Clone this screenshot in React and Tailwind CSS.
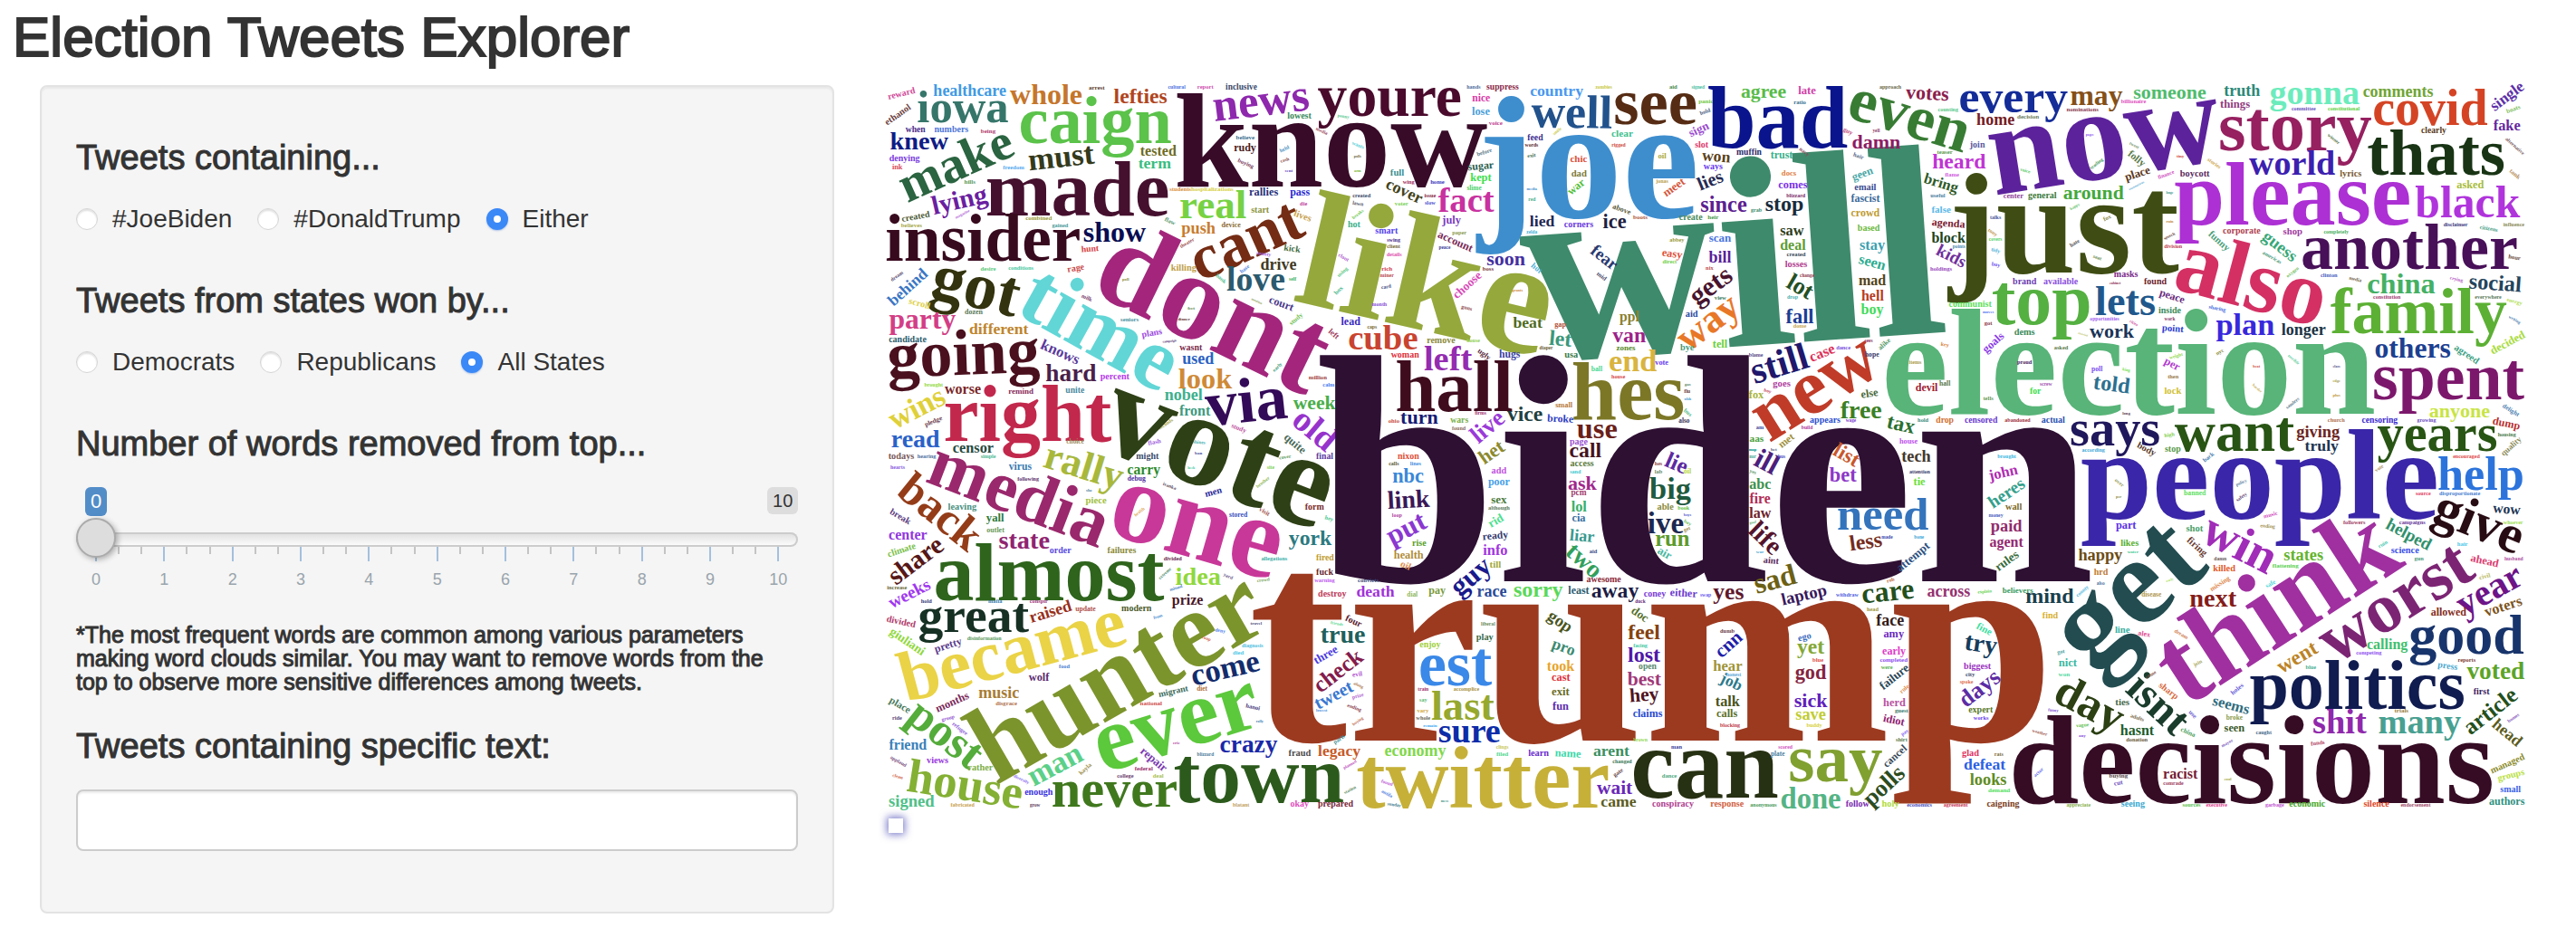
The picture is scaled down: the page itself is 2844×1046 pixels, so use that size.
import { useState } from "react";

// Advance widths of the bold serif face, in thousandths of an em.
const ADVANCE = {
  a: 500, b: 556, c: 444, d: 556, e: 444, f: 333, g: 500, h: 556, i: 278,
  j: 333, k: 556, l: 278, m: 833, n: 556, o: 500, p: 556, q: 556, r: 444,
  s: 389, t: 333, u: 556, v: 500, w: 722, x: 500, y: 500, z: 444,
};

// A word is [text, centre x, centre y, length, angle, colour].
// Centres lie on the middle of the x-height band.
const SECTIONS = [
  {
    x: -30, y: -42,
    words: [
      ["know", 1500, 273, 1020, 0, "#380b28"],
      ["reward", 79, 72, 92, -14, "#d14a9a"],
      ["iowa", 282, 129, 297, 0, "#36766a"],
      ["healthcare", 305, 64, 240, 0, "#419ae4"],
      ["whole", 558, 82, 235, 0, "#c5762b"],
      ["lefties", 870, 85, 175, 0, "#b04520"],
      ["ethanol", 68, 142, 98, -35, "#6b3f3f"],
      ["when", 125, 192, 65, 0, "#4b2e8c"],
      ["numbers", 244, 192, 112, 0, "#4d75d9"],
      ["being", 366, 195, 48, 0, "#b23a6e"],
      ["knew", 137, 235, 190, 0, "#101c85"],
      ["denying", 89, 288, 102, 0, "#7a3ce0"],
      ["ink", 65, 316, 34, 0, "#d94a5a"],
      ["make", 264, 315, 392, -24, "#2a6440"],
      ["caign", 720, 180, 500, 0, "#5bc24a"],
      ["must", 608, 288, 215, -6, "#343a1c"],
      ["tested", 929, 264, 118, 0, "#6e6b22"],
      ["term", 917, 304, 106, 0, "#38bd80"],
      ["freedom", 450, 315, 72, 0, "#55aaf0"],
      ["made", 662, 411, 600, 0, "#45102e"],
      ["news", 1270, 107, 315, -7, "#8e28ad"],
      ["lying", 272, 430, 182, -13, "#6a20a0"],
      ["created", 126, 480, 94, -10, "#4c5a34"],
      ["insider", 349, 571, 638, 0, "#380a1e"],
      ["show", 784, 538, 204, 0, "#080d52"],
      ["hunt", 703, 586, 57, -4, "#d44040"],
      ["rudy", 1216, 253, 72, 0, "#4a2020"],
      ["real", 1110, 452, 220, 0, "#76d243"],
      ["push", 1062, 522, 110, 0, "#c87c30"],
      ["rallies", 1278, 398, 96, 0, "#262f7a"],
      ["pass", 1398, 400, 64, 0, "#2a2ad4"],
      ["start", 1266, 457, 58, 0, "#8a9440"],
      ["lives", 1407, 477, 60, 20, "#c9a34e"],
      ["cant", 1225, 570, 380, -24, "#742c14"],
      ["dont", 1100, 811, 785, 26, "#a3267c"],
      ["time", 727, 868, 545, 29, "#62d6d6"],
      ["love", 1252, 697, 190, 0, "#2b5a6e"],
      ["drive", 1327, 640, 117, 0, "#3f3a24"],
      ["killing", 1013, 650, 82, 0, "#bfa04a"],
      ["kick", 1372, 586, 54, 8, "#3f6b3a"],
      ["court", 1336, 768, 82, 20, "#4a3a8c"],
      ["got", 322, 725, 285, 14, "#33330f"],
      ["behind", 102, 714, 155, -42, "#3a76c4"],
      ["scroll", 138, 768, 72, 15, "#e0d04a"],
      ["party", 148, 828, 218, 0, "#d33e86"],
      ["different", 401, 855, 196, 0, "#bf852c"],
      ["candidate", 99, 888, 122, 0, "#2b5c6e"],
      ["going", 284, 950, 498, -2, "#4a101e"],
      ["knows", 603, 930, 135, 24, "#5a3a9c"],
      ["hard", 640, 1003, 166, 0, "#4a1f4a"],
      ["percent", 785, 1010, 95, 0, "#b53ae8"],
      ["wasnt", 1037, 913, 74, 0, "#7a2a4a"],
      ["used", 1061, 952, 102, 0, "#2a62c4"],
      ["look", 1084, 1023, 174, 0, "#cf8a36"],
      ["nobel", 1013, 1073, 125, 0, "#3cb08c"],
      ["front", 1050, 1127, 102, 0, "#3c9a80"],
      ["plans", 908, 865, 68, -10, "#9b4ae0"],
      ["worse", 282, 1055, 119, 0, "#7a2626"],
      ["wins", 133, 1118, 192, -27, "#dfd03a"],
      ["right", 496, 1160, 546, 0, "#c2284c"],
      ["via", 1222, 1108, 262, -6, "#330a58"],
      ["read", 125, 1222, 160, 0, "#2a62c8"],
      ["week", 1446, 1100, 138, 0, "#4aae4a"],
      ["old", 1442, 1190, 150, 40, "#9633cc"],
      ["censor", 316, 1248, 133, 0, "#25493e"],
      ["quite", 1380, 1232, 80, 40, "#4a6b5a"],
      ["unite", 653, 1056, 62, 0, "#4a8aa0"],
      ["remind", 474, 1058, 84, 0, "#8a2a5a"],
      ["brought", 185, 1036, 62, 0, "#90d83c"],
      ["conditions", 474, 651, 82, 0, "#4ac8a0"],
      ["desire", 366, 651, 50, 0, "#58c878"],
      ["rage", 656, 650, 56, -10, "#c84848"],
      ["dream", 64, 676, 46, -35, "#5a4a70"],
      ["dozen", 318, 795, 60, 0, "#5a7a5a"],
      ["milk", 692, 748, 36, 24, "#7a3a6a"],
      ["seniors", 834, 819, 60, 0, "#4a90a0"],
      ["campaign", 966, 890, 46, -6, "#4a2a6a"],
      ["cultural", 990, 50, 56, 0, "#4a70e0"],
      ["report", 1085, 50, 54, 0, "#d050b0"],
      ["inclusive", 1204, 50, 104, 0, "#3a4a6a"],
      ["arrest", 725, 52, 54, 0, "#5a3a2a"],
      ["lowest", 1396, 146, 80, 0, "#3a8a5a"],
      ["believe", 1217, 218, 60, 0, "#3a7090"],
      ["buying", 1218, 303, 54, 24, "#7a3a5a"],
      ["held", 1347, 255, 32, -25, "#4a90c0"],
      ["cash", 1348, 291, 30, -15, "#8a4a4a"],
      ["sent", 1361, 326, 26, 0, "#6a4ac0"],
      ["students", 1002, 387, 70, 0, "#d89040"],
      ["hospitalizations", 1108, 387, 136, 0, "#d8d040"],
      ["hills", 305, 363, 36, 0, "#5a9a5a"],
      ["magazine", 281, 470, 52, -28, "#b060d8"],
      ["combined", 533, 483, 86, 0, "#9a9a3a"],
      ["gained", 604, 508, 54, 0, "#4a9a9a"],
      ["believes", 112, 508, 68, 0, "#a8a848"],
      ["flaw", 967, 494, 36, 25, "#5a9a70"],
      ["theater", 1025, 566, 50, -30, "#9a4a4a"],
      ["device", 1170, 508, 62, 0, "#8a6a30"],
      ["county", 1278, 602, 48, 8, "#a060e0"],
      ["base", 1216, 652, 34, -38, "#4a80e0"],
      ["bank", 1136, 684, 38, 40, "#4ac08a"],
      ["self", 1374, 687, 24, 0, "#3ab060"],
      ["mention", 1255, 758, 38, 25, "#8a9a50"],
      ["study", 1386, 818, 50, -40, "#70c050"],
      ["poll", 821, 686, 22, 0, "#8a8a3a"],
      ["feet", 1038, 783, 22, 0, "#4a7a3a"],
      ["dinner", 1014, 818, 38, 0, "#6a3a3a"],
      ["early", 1324, 977, 36, -45, "#4aa080"],
      ["pledge", 185, 1157, 60, -22, "#6a3a4a"],
      ["seconds", 954, 1166, 56, -34, "#a8a850"],
      ["study", 1195, 1180, 50, 22, "#c050a0"],
      ["flash", 917, 1226, 42, -12, "#a060e0"],
      ["shines", 1064, 1226, 42, 5, "#4ab0b0"],
      ["choice", 654, 1226, 58, 0, "#9a8a5a"],
      ["die", 1410, 436, 24, 0, "#c040a0"],
    ],
  },
  {
    x: 1380, y: -42,
    words: [
      ["will", 1426, 695, 1368, -4, "#3e8a6c"],
      ["youre", 285, 98, 474, 0, "#4a0a2c"],
      ["suppress", 659, 50, 108, 0, "#8a2a4a"],
      ["hands", 563, 50, 46, 0, "#5070a0"],
      ["nice", 588, 88, 59, 0, "#d93aa8"],
      ["lose", 587, 133, 58, 0, "#4aa0d9"],
      ["country", 838, 66, 175, 0, "#4a98f0"],
      ["well", 888, 146, 262, 1, "#22528c"],
      ["see", 1165, 120, 270, 0, "#562c14"],
      ["joe", 943, 345, 712, 0, "#3e8ece"],
      ["feed", 767, 217, 50, 0, "#3a2a8c"],
      ["clear", 1055, 206, 70, 0, "#3fc08c"],
      ["sign", 1310, 192, 68, -25, "#9a4ad0"],
      ["slot", 1318, 241, 44, 0, "#e03a6a"],
      ["ways", 1356, 314, 62, 0, "#6a3af0"],
      ["won", 1366, 282, 92, 5, "#5c4218"],
      ["lies", 1348, 362, 84, -22, "#252a52"],
      ["meet", 1228, 383, 78, -35, "#d4553a"],
      ["chic", 911, 289, 55, 0, "#d9503a"],
      ["dad", 912, 337, 50, 0, "#7a7a3a"],
      ["war", 904, 381, 62, -38, "#55c03a"],
      ["since", 1391, 445, 152, 0, "#5c2090"],
      ["sugar", 587, 313, 84, -5, "#2a6050"],
      ["kept", 587, 350, 68, 0, "#3ae04a"],
      ["slime", 565, 386, 47, 0, "#4ad06a"],
      ["full", 310, 335, 45, 0, "#3a9090"],
      ["cover", 332, 397, 125, 25, "#44441c"],
      ["fact", 538, 434, 182, 0, "#c832a0"],
      ["july", 490, 493, 60, 0, "#7a3ac0"],
      ["smart", 275, 528, 74, 0, "#5540f0"],
      ["hot", 167, 505, 41, 0, "#3ab08a"],
      ["account", 502, 562, 122, 24, "#7a2a5a"],
      ["lied", 790, 498, 80, 0, "#232852"],
      ["corners", 911, 505, 95, 0, "#6a3ae0"],
      ["ice", 1030, 500, 75, 0, "#1f1f3f"],
      ["above", 1053, 455, 62, 20, "#5a5a3a"],
      ["create", 1282, 481, 77, 0, "#4a8a5a"],
      ["soon", 670, 622, 126, 0, "#4530a0"],
      ["choose", 544, 707, 112, -42, "#d84ab8"],
      ["like", 401, 724, 830, 13, "#95a83c"],
      ["lead", 156, 829, 62, 0, "#3a2ac0"],
      ["cube", 263, 890, 227, 0, "#c94430"],
      ["woman", 336, 938, 92, 0, "#e0303a"],
      ["left", 478, 960, 155, 0, "#942cb0"],
      ["remove", 455, 889, 94, 0, "#8a8a3a"],
      ["beat", 742, 834, 95, 0, "#4e6a20"],
      ["let", 850, 888, 72, 5, "#3c987a"],
      ["hugs", 682, 938, 69, 0, "#3a40a0"],
      ["usa", 886, 938, 43, 0, "#3a7a4a"],
      ["hall", 499, 1065, 382, 0, "#3f0c1e"],
      ["turn", 383, 1148, 122, 0, "#161c74"],
      ["vice", 733, 1139, 116, 0, "#1f4040"],
      ["live", 613, 1178, 118, -40, "#9a3ad8"],
      ["broke", 850, 1150, 86, 3, "#2a3ac0"],
      ["small", 862, 1104, 55, 0, "#b87a3a"],
      ["hes", 1075, 1084, 365, 0, "#7c7726"],
      ["end", 1090, 965, 156, 0, "#d9b440"],
      ["way", 1345, 835, 222, -37, "#e87828"],
      ["van", 1078, 878, 108, 0, "#9c2288"],
      ["ppl", 1079, 814, 64, 0, "#8a8030"],
      ["zones", 1067, 914, 61, 0, "#5a8a2a"],
      ["use", 972, 1190, 131, 0, "#6a1f1a"],
      ["page", 911, 1227, 58, 0, "#9a50d0"],
      ["gets", 1352, 712, 150, -36, "#48142e"],
      ["bill", 1379, 618, 73, 0, "#5a2098"],
      ["fear", 993, 617, 96, 38, "#2a3a70"],
      ["easy", 1220, 603, 66, 8, "#e0503a"],
      ["scan", 1379, 553, 72, 0, "#4a74e0"],
      ["aid", 1285, 803, 40, 0, "#2a4aa0"],
      ["bye", 1270, 913, 45, 0, "#4a9a7a"],
      ["tell", 1379, 902, 48, 0, "#6ad03a"],
      ["wars", 516, 1153, 58, 0, "#7ab04a"],
      ["penny", 132, 146, 38, 8, "#58c890"],
      ["media", 60, 195, 40, 25, "#a04a60"],
      ["wants", 180, 242, 42, 22, "#58d0d8"],
      ["polls", 179, 278, 24, 0, "#6a6a3a"],
      ["arm", 179, 326, 22, 0, "#78b83a"],
      ["before", 599, 266, 52, -18, "#5a7a8a"],
      ["exit", 755, 277, 28, -8, "#3a6a4a"],
      ["words", 755, 243, 44, 0, "#5a2a2a"],
      ["smile", 840, 195, 32, -40, "#c8c840"],
      ["voice", 636, 170, 44, 0, "#c04090"],
      ["rigged", 1043, 243, 46, 0, "#d04a3a"],
      ["oil", 1187, 279, 26, 0, "#a8a83a"],
      ["jonas", 1187, 363, 40, 0, "#b8a050"],
      ["zombies", 994, 50, 54, 0, "#c8c840"],
      ["aid", 1224, 50, 26, 0, "#4a8a4a"],
      ["signed", 1306, 50, 42, 0, "#4ac0a0"],
      ["panic", 1332, 98, 48, 0, "#70c848"],
      ["hold", 1330, 132, 36, -20, "#4a6080"],
      ["media", 756, 387, 34, 0, "#4a90d0"],
      ["red", 756, 423, 24, 0, "#4ab090"],
      ["zelda", 756, 531, 36, 0, "#40b0d8"],
      ["issue", 419, 411, 38, 0, "#8a2a4a"],
      ["slow", 419, 435, 36, 0, "#4a50d0"],
      ["wing", 348, 364, 38, 0, "#a02a5a"],
      ["home", 443, 364, 46, 0, "#3a3ac0"],
      ["created", 192, 410, 60, 0, "#3a4a6a"],
      ["voter", 324, 435, 44, 0, "#78d050"],
      ["lawn", 180, 436, 36, 8, "#5a5a6a"],
      ["breaks", 180, 470, 42, -38, "#68c848"],
      ["swing", 298, 556, 44, 0, "#4a2a8a"],
      ["client", 298, 579, 44, 0, "#7a6a3a"],
      ["details", 300, 604, 48, 0, "#e050b0"],
      ["rich", 276, 651, 36, 0, "#d04050"],
      ["miner", 276, 675, 46, 0, "#b84a50"],
      ["card", 274, 711, 32, -10, "#3a4a80"],
      ["month", 251, 771, 50, 0, "#8a50d8"],
      ["clout", 132, 614, 38, 30, "#b060d0"],
      ["using", 130, 662, 40, -42, "#58c880"],
      ["box", 117, 723, 32, -45, "#4ab890"],
      ["paper", 516, 532, 46, 0, "#8a9a50"],
      ["peace", 467, 580, 38, 0, "#3a3a9a"],
      ["boss", 611, 652, 36, 0, "#7a3a3a"],
      ["guns", 540, 781, 36, 15, "#904a4a"],
      ["grants", 708, 723, 36, 0, "#d08a40"],
      ["hot", 770, 650, 36, 40, "#50b0d8"],
      ["mid", 986, 676, 34, 38, "#4a4a6a"],
      ["boots", 1115, 482, 46, 0, "#b05a3a"],
      ["heir", 1356, 482, 36, 0, "#4a9a4a"],
      ["abbey", 1236, 556, 48, 0, "#9a9a3a"],
      ["direct", 1212, 628, 46, 0, "#70d048"],
      ["nix", 1344, 651, 24, 0, "#c04a4a"],
      ["view", 1380, 748, 38, 0, "#3a7a5a"],
      ["gap", 850, 838, 38, 0, "#b0503a"],
      ["diaper", 803, 915, 44, 0, "#6a5a30"],
      ["house", 562, 891, 44, 0, "#90d050"],
      ["ugly", 597, 935, 46, 38, "#5a2a3a"],
      ["ball", 971, 986, 36, 0, "#48d890"],
      ["vote", 1186, 963, 44, 0, "#6a3af0"],
      ["house", 1042, 1011, 46, 0, "#d84a4a"],
      ["million", 47, 1011, 60, 0, "#a04040"],
      ["calm", 83, 1036, 38, 0, "#4a80f0"],
      ["ohio", 299, 1156, 36, 0, "#c84a40"],
      ["found", 514, 1180, 44, 0, "#8a6a5a"],
      ["firms", 586, 1130, 38, 0, "#a03070"],
      ["gas", 1272, 1034, 20, 0, "#5a8a6a"],
      ["flu", 1270, 1058, 20, 0, "#6a3a3a"],
      ["ohh", 1272, 1083, 22, 0, "#4a9ad0"],
      ["bus", 1271, 1128, 28, 40, "#4ab880"],
      ["also", 1260, 1156, 36, 0, "#3a3a5a"],
      ["left", 99, 868, 36, 40, "#a04060"],
      ["caps", 227, 844, 32, 0, "#7a6a30"],
    ],
  },
  {
    x: 2760, y: -42,
    words: [
      ["bad", 190, 180, 455, 0, "#0a148c"],
      ["agree", 143, 70, 150, 0, "#58bc48"],
      ["late", 287, 63, 57, 0, "#d040a8"],
      ["even", 623, 159, 402, 17, "#387c34"],
      ["votes", 685, 74, 140, 3, "#8c204c"],
      ["damn", 516, 237, 158, 0, "#8c1c64"],
      ["home", 911, 160, 123, 0, "#741c24"],
      ["every", 970, 96, 356, 0, "#142c98"],
      ["may", 1245, 85, 170, 0, "#845018"],
      ["join", 851, 241, 48, 0, "#5a5aa0"],
      ["heard", 790, 300, 174, 0, "#c034d4"],
      ["now", 1274, 245, 758, -9, "#5c229c"],
      ["bring", 730, 370, 115, 17, "#2e5a28"],
      ["geen", 471, 338, 70, -20, "#4aa8a8"],
      ["email", 480, 384, 70, 0, "#3a4a90"],
      ["fascist", 480, 420, 95, 0, "#3a6a9a"],
      ["crowd", 480, 469, 95, 0, "#c09a30"],
      ["based", 491, 517, 72, 0, "#68b83c"],
      ["stay", 503, 575, 83, 0, "#3ca0b0"],
      ["seen", 502, 632, 88, 15, "#2cac90"],
      ["mad", 503, 695, 89, 0, "#54441a"],
      ["hell", 504, 744, 73, 0, "#b83c24"],
      ["boy", 503, 790, 73, 0, "#40dc58"],
      ["docs", 227, 337, 48, 0, "#e08040"],
      ["comes", 240, 374, 95, 0, "#7a30e8"],
      ["blizzard", 250, 410, 64, 0, "#7a2a6a"],
      ["stop", 212, 443, 125, 0, "#182c3c"],
      ["saw", 237, 527, 77, 0, "#2c3c1a"],
      ["deal", 240, 577, 84, 0, "#609c34"],
      ["losses", 251, 637, 73, 0, "#b04090"],
      ["lot", 262, 715, 85, 30, "#245024"],
      ["fall", 263, 814, 90, 0, "#1c3c94"],
      ["trust", 203, 278, 73, 0, "#3ab08a"],
      ["muffin", 95, 265, 84, 0, "#2a2a6a"],
      ["false", 731, 458, 62, 0, "#58b8e8"],
      ["agenda", 755, 503, 110, 4, "#7a2030"],
      ["block", 755, 552, 110, 0, "#1c4420"],
      ["kids", 763, 612, 100, 27, "#70309c"],
      ["general", 1066, 409, 93, 0, "#3a7a3a"],
      ["around", 1235, 406, 200, 0, "#44a83c"],
      ["just", 1137, 550, 745, 0, "#3f4d14"],
      ["brand", 1007, 695, 77, 0, "#6a3ab0"],
      ["available", 1127, 696, 115, 0, "#8a50e0"],
      ["masks", 1343, 672, 80, 0, "#7a2a8a"],
      ["top", 1064, 778, 322, 0, "#54b040"],
      ["communist", 827, 769, 140, 0, "#5ce05c"],
      ["lets", 1341, 770, 195, 0, "#20588c"],
      ["work", 1296, 862, 143, 0, "#1a3458"],
      ["dems", 1007, 864, 67, 0, "#3a8a5a"],
      ["goals", 905, 897, 80, -42, "#8a3ae8"],
      ["still", 198, 975, 190, -17, "#20186c"],
      ["case", 338, 932, 85, -22, "#dc3058"],
      ["new", 320, 1056, 440, -32, "#c03c28"],
      ["fox", 119, 1070, 48, 0, "#a8b43a"],
      ["goes", 203, 1033, 57, 0, "#b040a0"],
      ["free", 466, 1125, 137, 0, "#3a8024"],
      ["tax", 597, 1170, 90, 13, "#2a7030"],
      ["else", 494, 1066, 56, -8, "#4a6a3a"],
      ["devil", 683, 1047, 73, 0, "#a02030"],
      ["told", 1295, 1039, 118, 7, "#2c7090"],
      ["for", 1043, 1057, 36, 0, "#3ae04a"],
      ["appears", 347, 1153, 99, 0, "#2a50d0"],
      ["drop", 743, 1153, 58, 0, "#d07030"],
      ["censored", 863, 1153, 110, 0, "#6a3ad0"],
      ["actual", 1102, 1153, 76, 0, "#2a50b0"],
      ["abandoned", 984, 1155, 86, 0, "#a03040"],
      ["election", 1352, 1014, 1620, 0, "#58b478"],
      ["says", 1307, 1195, 293, 0, "#20185c"],
      ["aas", 120, 1215, 46, 0, "#4aa03a"],
      ["met", 220, 1222, 55, -38, "#a0903a"],
      ["house", 623, 1225, 60, 0, "#c050f0"],
      ["according", 1235, 1252, 76, 0, "#40a8d8"],
      ["ratio", 263, 99, 40, 0, "#3a7090"],
      ["approach", 563, 51, 72, 0, "#6a6a4a"],
      ["counting", 754, 124, 66, 0, "#58c888"],
      ["decision", 1019, 147, 70, 0, "#6a7a5a"],
      ["nominations", 1199, 124, 104, 0, "#8a3a50"],
      ["yell", 516, 195, 24, 0, "#8a3a6a"],
      ["guy", 422, 196, 32, 25, "#c05080"],
      ["hair", 457, 278, 34, 20, "#5a6a8a"],
      ["navy", 277, 264, 36, 38, "#8a4a5a"],
      ["grab", 119, 459, 36, 0, "#3a8a6a"],
      ["created", 251, 603, 62, 0, "#3a4a5a"],
      ["change", 287, 674, 46, 0, "#903a50"],
      ["drop", 239, 747, 36, 0, "#4ab0b0"],
      ["dome", 263, 843, 44, 0, "#c8a858"],
      ["flame", 767, 339, 46, 0, "#d060e0"],
      ["useful", 720, 411, 48, 0, "#4a80a0"],
      ["teaser", 743, 266, 50, 0, "#5a9a4a"],
      ["holdings", 731, 651, 70, 0, "#9a4ac0"],
      ["points", 790, 579, 42, 0, "#4a8ab0"],
      ["talks", 911, 483, 36, 0, "#4a5aa0"],
      ["tony", 901, 531, 34, 35, "#c09850"],
      ["covers", 911, 555, 44, 0, "#50d060"],
      ["tidy", 911, 591, 30, 15, "#50b0d8"],
      ["buy", 912, 638, 28, 10, "#6a50f0"],
      ["moves", 887, 796, 38, 0, "#5a7af0"],
      ["got", 887, 831, 26, 0, "#8a3a4a"],
      ["center", 970, 411, 66, 0, "#90409a"],
      ["pages", 1223, 207, 26, 0, "#9050f0"],
      ["voice", 1009, 326, 34, 15, "#50c860"],
      ["trading", 1246, 303, 50, -38, "#4a9a5a"],
      ["happy", 1174, 445, 34, -30, "#60c060"],
      ["fox", 1281, 483, 26, -25, "#8a8a4a"],
      ["hate", 1174, 567, 34, -30, "#5a5a5a"],
      ["seat", 1248, 614, 28, 20, "#6a8a4a"],
      ["cabinet", 1307, 698, 36, 0, "#8a3050"],
      ["cheering", 1200, 868, 34, 15, "#b8c060"],
      ["opportunities", 1272, 819, 96, 0, "#a060f0"],
      ["asked", 1128, 914, 46, 0, "#5a7a4a"],
      ["dance", 407, 914, 46, 0, "#7a50e0"],
      ["hope", 502, 938, 46, 0, "#3a3a6a"],
      ["alike", 544, 901, 46, -42, "#5a9a6a"],
      ["sees", 491, 891, 26, 0, "#8a3060"],
      ["key", 743, 903, 26, 8, "#d88040"],
      ["blame", 118, 938, 46, 0, "#5a4a8a"],
      ["boy", 156, 1056, 24, 15, "#c04060"],
      ["hall", 743, 1034, 36, 0, "#5a7a4a"],
      ["items", 645, 963, 40, 0, "#a89848"],
      ["proud", 1007, 963, 50, 0, "#4a2060"],
      ["poll", 1247, 986, 36, 0, "#7a50f0"],
      ["king", 1344, 986, 26, 10, "#70e050"],
      ["screw", 1078, 1035, 42, 0, "#a050b0"],
      ["tells", 887, 1082, 34, 0, "#6a9a5a"],
      ["hold", 671, 1155, 36, 0, "#3a8a7a"],
      ["wage", 432, 1155, 34, 0, "#7a3ad0"],
      ["build", 287, 1178, 38, 0, "#b040a0"],
      ["am", 131, 1179, 24, 0, "#3a4a9a"],
      ["map", 107, 1250, 24, 0, "#40b0b0"],
      ["bet", 177, 1250, 20, 0, "#4a5a7a"],
    ],
  },
  {
    x: 4080, y: -42,
    words: [
      ["someone", 168, 70, 241, 0, "#50bc6c"],
      ["truth", 407, 66, 117, 0, "#2c8878"],
      ["things", 384, 109, 97, 0, "#903a80"],
      ["gonna", 647, 78, 293, 0, "#6cecbc"],
      ["comments", 924, 67, 232, 0, "#70a434"],
      ["covid", 1030, 135, 375, 0, "#d44424"],
      ["single", 1287, 82, 125, -37, "#5c30a8"],
      ["fake", 1284, 180, 87, 0, "#6428a0"],
      ["clearly", 1042, 193, 84, 0, "#5a3a20"],
      ["story", 583, 203, 499, 0, "#962060"],
      ["thats", 1050, 287, 450, 0, "#183414"],
      ["world", 573, 313, 280, 0, "#3c20b0"],
      ["lyrics", 767, 337, 72, 0, "#7a5a30"],
      ["please", 575, 433, 775, 0, "#ac30d4"],
      ["boycott", 251, 337, 97, 0, "#5a2a60"],
      ["place", 62, 338, 85, -18, "#5c3820"],
      ["folly", 57, 287, 62, 38, "#5a7a4a"],
      ["black", 1154, 445, 342, 0, "#b034dc"],
      ["asked", 1163, 374, 88, 0, "#a8bc3a"],
      ["corporate", 406, 528, 125, 0, "#b04050"],
      ["shop", 575, 528, 62, 0, "#a03aa0"],
      ["guess", 530, 580, 128, 38, "#38a878"],
      ["funny", 330, 560, 80, 42, "#4aa07a"],
      ["another", 961, 599, 712, 0, "#481058"],
      ["also", 435, 710, 495, 15, "#d43064"],
      ["china", 934, 710, 223, 0, "#44b064"],
      ["social", 1245, 704, 172, 4, "#24445c"],
      ["found", 120, 695, 75, 0, "#6a1a2a"],
      ["peace", 175, 744, 85, 18, "#6a2a80"],
      ["inside", 168, 792, 75, 0, "#3a8a5a"],
      ["point", 178, 850, 70, 4, "#2a3ad0"],
      ["plan", 418, 847, 190, 0, "#3828dc"],
      ["longer", 611, 857, 146, 0, "#1c3444"],
      ["family", 992, 813, 577, 0, "#5cb034"],
      ["others", 972, 922, 250, 0, "#1c4090"],
      ["decided", 1288, 898, 122, -28, "#a8dc3c"],
      ["agreed", 1150, 935, 92, 34, "#3aa080"],
      ["spent", 1090, 1030, 494, 0, "#7c186c"],
      ["anyone", 1127, 1127, 200, 0, "#c8e444"],
      ["lock", 178, 1056, 55, 0, "#d0c030"],
      ["per", 175, 968, 52, 28, "#b03ad0"],
      ["censoring", 863, 1153, 120, 0, "#3a2ad0"],
      ["dump", 1282, 1165, 90, 12, "#b83030"],
      ["giving", 659, 1197, 142, 0, "#6c2420"],
      ["truly", 671, 1242, 109, 0, "#1c3450"],
      ["years", 1054, 1212, 392, 0, "#285414"],
      ["want", 382, 1210, 390, 0, "#285414"],
      ["stop", 178, 1249, 52, 0, "#5a9a4a"],
      ["billionaire", 48, 99, 84, 0, "#e050c0"],
      ["committee", 611, 123, 80, 0, "#6a50c0"],
      ["constitutional", 744, 123, 106, 0, "#60d040"],
      ["boats", 1306, 123, 46, -20, "#80c060"],
      ["alternative", 1310, 245, 78, 42, "#7a5a5a"],
      ["tank", 1310, 338, 40, 40, "#b89060"],
      ["winner", 710, 221, 46, 38, "#5a7a4a"],
      ["tiny", 203, 279, 24, 0, "#d04a3a"],
      ["stories", 314, 302, 48, 35, "#d0a850"],
      ["finance", 156, 340, 54, -20, "#d050c0"],
      ["coronavirus", 58, 375, 58, -28, "#50a8d0"],
      ["tweet", 50, 242, 34, 28, "#7a9a6a"],
      ["huge", 168, 399, 24, 0, "#4a9a8a"],
      ["ruin", 168, 494, 24, 0, "#c08a40"],
      ["speech", 167, 543, 40, -25, "#6a4a3a"],
      ["division", 179, 579, 60, 0, "#c04050"],
      ["americas", 506, 614, 70, 30, "#4a9a7a"],
      ["oxygen", 575, 662, 46, -38, "#70c060"],
      ["completely", 719, 531, 84, 0, "#4ab060"],
      ["disclaimer", 1114, 507, 80, 0, "#3a3a80"],
      ["influence", 1307, 507, 70, 0, "#8a8a5a"],
      ["citizens", 1224, 519, 58, 10, "#3a9a80"],
      ["hour", 1309, 614, 40, 10, "#6a4a3a"],
      ["clinton", 695, 675, 54, 0, "#4a60c0"],
      ["media", 782, 686, 40, 12, "#6a5a3a"],
      ["crying", 1117, 686, 44, 12, "#b050c0"],
      ["constitution", 887, 747, 92, 0, "#a03a70"],
      ["everywhere", 1222, 747, 88, 0, "#5a7a5a"],
      ["energy", 1309, 760, 50, 15, "#b0e050"],
      ["writing", 1309, 820, 42, 30, "#4a80b0"],
      ["sharing", 325, 783, 58, 12, "#4a70e0"],
      ["work", 168, 819, 34, 0, "#8a3a6a"],
      ["cities", 48, 831, 30, 30, "#d050a0"],
      ["weight", 189, 940, 46, -15, "#90d850"],
      ["then", 179, 1011, 36, 0, "#9a7a4a"],
      ["nyc", 334, 927, 26, -30, "#8a8a3a"],
      ["beat", 455, 974, 24, 0, "#d04a3a"],
      ["terrible", 577, 952, 46, 40, "#60d0a0"],
      ["class", 720, 974, 24, 0, "#4a4a8a"],
      ["edge", 720, 1023, 24, 0, "#a8a050"],
      ["plus", 720, 1071, 24, 0, "#c09840"],
      ["harder", 457, 1047, 38, 42, "#c8b060"],
      ["sanders", 575, 1096, 52, -38, "#5a7a8a"],
      ["church", 719, 1155, 56, 0, "#b07050"],
      ["growing", 1018, 1155, 62, 0, "#6a4ac0"],
      ["delight", 1297, 1120, 62, 32, "#4a80b0"],
      ["housing", 1284, 1203, 60, 0, "#4a7a4a"],
      ["quality", 1300, 1240, 80, -42, "#8a8a5a"],
      ["long", 24, 1131, 26, 0, "#5a3a4a"],
      ["high", 167, 1202, 34, -10, "#80d050"],
      ["body", 90, 1250, 64, 28, "#5a3a2a"],
    ],
  },
  {
    x: -30, y: 1188,
    words: [
      ["vote", 1122, 50, 775, 21, "#2e4016"],
      ["virus", 472, 80, 75, 0, "#3a7ab0"],
      ["todays", 78, 43, 86, 0, "#7a5a5a"],
      ["rally", 680, 84, 262, 17, "#a8b83c"],
      ["might", 893, 44, 74, 0, "#3a4a6a"],
      ["carry", 881, 90, 108, 0, "#2e8a2c"],
      ["media", 463, 183, 612, 21, "#9a286c"],
      ["back", 200, 236, 305, 39, "#943c18"],
      ["leaving", 280, 211, 94, 0, "#4a9080"],
      ["yall", 389, 249, 58, 0, "#2e7a3a"],
      ["piece", 723, 188, 67, 0, "#a0c040"],
      ["state", 485, 327, 166, 0, "#902470"],
      ["center", 100, 305, 126, 0, "#9038e0"],
      ["break", 74, 243, 74, 30, "#5a3a80"],
      ["climate", 80, 354, 94, -18, "#7ac04a"],
      ["share", 130, 392, 203, -37, "#561818"],
      ["weeks", 107, 500, 145, -27, "#a038f0"],
      ["order", 605, 354, 70, 0, "#5a4ae0"],
      ["failures", 808, 354, 97, 0, "#8a8a3a"],
      ["almost", 567, 453, 755, 0, "#2e641c"],
      ["one", 1054, 287, 562, 16, "#c83898"],
      ["idea", 1061, 447, 148, 0, "#90d83c"],
      ["prize", 1026, 522, 102, 0, "#4a1828"],
      ["great", 317, 585, 365, 0, "#163024"],
      ["raised", 573, 560, 142, -17, "#98301c"],
      ["modern", 857, 547, 99, 0, "#4a5a2a"],
      ["divided", 77, 592, 96, 12, "#b03a6a"],
      ["giuliani", 97, 657, 130, 34, "#90d83c"],
      ["pretty", 234, 670, 92, -18, "#5a3a8c"],
      ["became", 450, 704, 758, -15, "#ead346"],
      ["wolf", 534, 777, 67, 0, "#5a2a70"],
      ["music", 401, 828, 133, 0, "#a87c34"],
      ["months", 248, 858, 116, -24, "#7a2a5a"],
      ["migrant", 979, 822, 98, -12, "#3a6a5a"],
      ["hunter", 806, 793, 1045, -30, "#7c942c"],
      ["come", 1152, 752, 226, -13, "#142c6c"],
      ["ever", 992, 942, 548, -17, "#5cc83c"],
      ["crazy", 1228, 1002, 189, 0, "#1a28a8"],
      ["fraud", 1397, 1026, 72, 0, "#4a4a4a"],
      ["post", 218, 970, 268, 38, "#54ac3a"],
      ["friend", 100, 1002, 124, 0, "#3a80b8"],
      ["views", 198, 1050, 70, 0, "#9a3ae0"],
      ["rather", 340, 1075, 84, 0, "#80b04a"],
      ["repair", 912, 1048, 102, 40, "#7a3ab0"],
      ["man", 590, 1070, 188, -28, "#5cd088"],
      ["house", 288, 1143, 380, 9, "#84b034"],
      ["enough", 533, 1157, 92, 0, "#3a30e0"],
      ["never", 784, 1160, 412, 0, "#40781e"],
      ["signed", 112, 1189, 149, 0, "#50c088"],
      ["town", 1262, 1125, 556, 0, "#2c5a1c"],
      ["okay", 1397, 1196, 60, 0, "#e050c0"],
      ["hearing", 162, 45, 60, 0, "#5070a0"],
      ["simple", 366, 45, 48, 0, "#4ab890"],
      ["hearts", 66, 80, 48, 0, "#8a60e0"],
      ["following", 498, 118, 72, 0, "#5a2a6a"],
      ["debug", 857, 118, 60, 0, "#4a2a9a"],
      ["men", 1112, 162, 56, -15, "#2a2a9a"],
      ["stored", 1194, 237, 60, 0, "#3a50c0"],
      ["outlet", 390, 286, 58, 0, "#6a9a5a"],
      ["ivanka", 966, 141, 46, 20, "#5a4a5a"],
      ["visit", 1280, 226, 36, 30, "#a0504a"],
      ["health", 867, 226, 40, -38, "#e0a858"],
      ["brother", 1276, 128, 52, -38, "#90b858"],
      ["site", 1301, 80, 24, 0, "#80d050"],
      ["cover", 1349, 45, 38, -8, "#5a9a5a"],
      ["ban", 1062, 32, 24, 0, "#4a50a0"],
      ["heck", 1038, 81, 24, 0, "#40c8a0"],
      ["divided", 977, 381, 60, 0, "#6a2a50"],
      ["allegations", 1313, 381, 84, 0, "#40b0a8"],
      ["yard", 1160, 440, 32, 25, "#6a5a8a"],
      ["extreme", 951, 430, 50, -42, "#4a8a6a"],
      ["missed", 988, 478, 44, -18, "#4a80c0"],
      ["crowd", 1277, 452, 42, -8, "#80a860"],
      ["increase", 64, 478, 64, 0, "#6a6a3a"],
      ["hold", 161, 524, 36, 0, "#3a3a7a"],
      ["mafia", 389, 524, 46, 0, "#3a80b0"],
      ["conspir", 533, 524, 58, 0, "#a03a80"],
      ["update", 688, 549, 68, 0, "#b0504a"],
      ["disinformation", 353, 645, 116, 0, "#5a9a5a"],
      ["food", 618, 740, 36, 0, "#4a80d0"],
      ["from", 928, 573, 32, -18, "#4a90d0"],
      ["coup", 1088, 645, 30, 20, "#d06050"],
      ["deny", 1134, 620, 34, 8, "#4a80f0"],
      ["travel", 1253, 596, 36, 0, "#4a4a7a"],
      ["diagnosis", 1241, 669, 70, 0, "#50c0e0"],
      ["died", 1194, 692, 36, 0, "#50c8e8"],
      ["diet", 1074, 814, 34, 0, "#b07040"],
      ["disgrace", 426, 861, 72, 0, "#b0704a"],
      ["national", 905, 861, 72, 0, "#d0504a"],
      ["hanoi", 1242, 873, 46, 12, "#4a3a7a"],
      ["rally", 1265, 920, 24, 0, "#4a80b0"],
      ["place", 73, 868, 74, 30, "#4a7a5a"],
      ["ride", 64, 909, 32, 0, "#5a4a7a"],
      ["group", 233, 910, 44, -15, "#9050d0"],
      ["refugee", 271, 945, 60, 38, "#9060d8"],
      ["applaud", 68, 1053, 60, 30, "#7a5080"],
      ["clean", 66, 1103, 36, 15, "#d06a50"],
      ["fabricated", 281, 1197, 80, 0, "#c8a050"],
      ["diversity", 476, 1112, 56, 25, "#8060f0"],
      ["grow", 521, 1199, 34, 0, "#5a3a5a"],
      ["kayla", 688, 1078, 48, -42, "#a09050"],
      ["college", 820, 1102, 54, 0, "#6a3a6a"],
      ["deal", 929, 1102, 34, 0, "#a8c050"],
      ["federal", 881, 1077, 60, 0, "#9a2a6a"],
      ["blizzard", 1085, 1029, 56, 0, "#4a7a9a"],
      ["eric", 989, 993, 22, 0, "#b040a0"],
      ["blatant", 1203, 1197, 54, 0, "#c0a060"],
      ["she", 700, 153, 20, 0, "#4a80a0"],
    ],
  },
  {
    x: 1380, y: 1188,
    words: [
      ["biden", 1330, 200, 2535, 0, "#2e1033"],
      ["trump", 1153, 751, 2630, 0, "#9c3a20"],
      ["het", 625, 32, 85, -35, "#8c8a30"],
      ["call", 933, 28, 104, 0, "#45141f"],
      ["nixon", 347, 43, 70, 0, "#e0503a"],
      ["nbc", 346, 112, 101, 0, "#3a88d8"],
      ["link", 348, 192, 136, -3, "#3a1858"],
      ["put", 343, 287, 132, -27, "#8a38d0"],
      ["rise", 383, 332, 46, 0, "#58a02c"],
      ["health", 348, 370, 97, 0, "#b08c3a"],
      ["add", 647, 92, 48, 0, "#c050e0"],
      ["poor", 647, 130, 71, 0, "#45a0e8"],
      ["sex", 647, 188, 50, 0, "#4a7a3a"],
      ["rid", 638, 258, 50, -30, "#4ae08c"],
      ["ready", 635, 307, 84, -5, "#333a70"],
      ["info", 635, 355, 80, 0, "#a035e0"],
      ["guy", 558, 445, 142, -40, "#1a1a8c"],
      ["till", 635, 403, 37, 0, "#a0a83a"],
      ["ask", 923, 137, 93, 0, "#a0288c"],
      ["pcm", 911, 164, 50, 0, "#a03a6a"],
      ["lol", 912, 212, 50, 0, "#3ab06a"],
      ["cia", 911, 249, 44, 0, "#3a70a0"],
      ["liar", 922, 310, 80, 5, "#3a9a90"],
      ["two", 925, 392, 128, 42, "#32a05c"],
      ["access", 922, 68, 76, 0, "#5a7a3a"],
      ["lie", 1233, 70, 72, 24, "#5c2aa0"],
      ["big", 1214, 157, 133, 0, "#1f5a40"],
      ["able", 1198, 212, 54, 0, "#8a8a3a"],
      ["ive", 1199, 272, 117, 0, "#1c2850"],
      ["run", 1221, 322, 112, 0, "#5c9a2c"],
      ["air", 1194, 365, 46, 30, "#4ab8a0"],
      ["york", 22, 319, 140, 0, "#2c7a80"],
      ["final", 70, 43, 56, 0, "#5a3aa0"],
      ["form", 36, 212, 62, 0, "#7a2a2a"],
      ["fired", 71, 380, 58, 0, "#c09a30"],
      ["fuck", 70, 428, 56, 0, "#6a1f2a"],
      ["warning", 70, 455, 66, 0, "#c05af0"],
      ["destroy", 95, 500, 94, 0, "#c03a5a"],
      ["death", 238, 492, 125, 0, "#a032d8"],
      ["pay", 442, 490, 55, 0, "#7a9a3a"],
      ["race", 623, 493, 97, 0, "#2a4a98"],
      ["sorry", 777, 490, 160, 0, "#5ad858"],
      ["least", 911, 489, 68, 0, "#2b5a6e"],
      ["away", 1031, 492, 155, 0, "#1c1c44"],
      ["awesome", 994, 452, 112, 0, "#8a2a3a"],
      ["coney", 1163, 500, 73, 0, "#7a3ad8"],
      ["either", 1258, 498, 89, 3, "#6a3ad0"],
      ["yes", 1407, 497, 100, 0, "#60182a"],
      ["four", 165, 590, 56, 25, "#5a2030"],
      ["true", 130, 640, 146, 0, "#20605c"],
      ["three", 75, 702, 85, -30, "#4a3ae0"],
      ["check", 118, 757, 182, -38, "#841c4c"],
      ["tweet", 102, 837, 135, -28, "#3a78d0"],
      ["enjoy", 419, 668, 68, 0, "#a0d03a"],
      ["est", 502, 752, 235, 0, "#3a88e8"],
      ["play", 600, 643, 55, 0, "#3a6a4a"],
      ["last", 527, 882, 205, 0, "#96a82e"],
      ["sure", 549, 962, 205, 0, "#0c2ca8"],
      ["gop", 847, 592, 85, 34, "#4a5420"],
      ["pro", 860, 677, 78, 20, "#3c8a70"],
      ["took", 851, 740, 88, 0, "#e8a42c"],
      ["cast", 852, 777, 60, 0, "#e0303a"],
      ["exit", 851, 825, 58, 0, "#6a6a1f"],
      ["fun", 851, 873, 52, 0, "#5c2ab0"],
      ["doc", 1112, 568, 58, 35, "#55702a"],
      ["feel", 1127, 630, 104, 0, "#84420f"],
      ["lost", 1127, 705, 105, 0, "#5018a8"],
      ["open", 1139, 740, 58, 0, "#5a8a70"],
      ["best", 1128, 784, 110, 0, "#a03878"],
      ["hey", 1128, 837, 95, -4, "#50141f"],
      ["claims", 1139, 897, 96, 0, "#2a4ad0"],
      ["cnn", 1410, 668, 95, -42, "#2020a8"],
      ["hear", 1404, 740, 95, 0, "#a09438"],
      ["job", 1415, 792, 72, 25, "#2c7a8c"],
      ["talk", 1404, 858, 80, 0, "#4a5420"],
      ["calls", 1402, 897, 69, 0, "#5a702a"],
      ["legacy", 118, 1022, 140, 0, "#c85a28"],
      ["economy", 370, 1022, 200, 0, "#80d84a"],
      ["learn", 778, 1028, 67, 0, "#6a2ad0"],
      ["name", 875, 1028, 84, 3, "#3ad8a8"],
      ["arent", 1019, 1022, 118, 0, "#3a9060"],
      ["twitter", 594, 1135, 828, 0, "#c6b038"],
      ["wait", 1030, 1145, 115, 0, "#6a28b8"],
      ["came", 1043, 1190, 116, 0, "#5c5c20"],
      ["prepared", 106, 1195, 117, 0, "#7a1f3a"],
      ["conspiracy", 1223, 1196, 137, 0, "#b04090"],
      ["response", 1402, 1196, 110, 0, "#d06040"],
      ["can", 1328, 1095, 477, 0, "#263012"],
      ["calls", 299, 69, 34, 0, "#5a5a3a"],
      ["lines", 371, 69, 36, 0, "#4a90e0"],
      ["loop", 309, 237, 32, 0, "#b040a0"],
      ["oil", 337, 405, 34, 25, "#e09050"],
      ["although", 647, 213, 70, 0, "#5a7a5a"],
      ["sand", 900, 93, 36, 0, "#40c8d0"],
      ["aid", 959, 357, 24, 0, "#3a4a8a"],
      ["hes", 1175, 69, 24, 0, "#904a4a"],
      ["lab", 1175, 93, 24, 0, "#6a8a6a"],
      ["oil", 1271, 93, 24, 0, "#b8d840"],
      ["book", 1258, 213, 38, 0, "#60c040"],
      ["boys", 1271, 237, 24, 0, "#5a60d0"],
      ["bay", 1271, 262, 26, 30, "#70c060"],
      ["get", 1270, 284, 22, -20, "#9a8a4a"],
      ["convicts", 214, 453, 68, 0, "#3a4a7a"],
      ["dial", 360, 500, 34, 0, "#90b860"],
      ["swap", 1331, 502, 36, 0, "#6a60f0"],
      ["duck", 1115, 524, 34, 0, "#6a2a7a"],
      ["hey", 84, 249, 28, 15, "#48c890"],
      ["friends", 110, 597, 42, 10, "#58d890"],
      ["liberal", 611, 597, 46, 0, "#6a8a5a"],
      ["evil", 178, 765, 32, -8, "#b050d0"],
      ["along", 182, 800, 34, 25, "#b08050"],
      ["prize", 180, 837, 38, -15, "#b060d0"],
      ["ending", 168, 875, 48, 20, "#8a3a4a"],
      ["lowest", 60, 884, 36, 0, "#4a90e0"],
      ["buying", 180, 920, 42, -35, "#c06a50"],
      ["parts", 119, 980, 42, -35, "#3a8a90"],
      ["train", 396, 814, 36, 0, "#a0306a"],
      ["accomplice", 539, 814, 84, 0, "#a89040"],
      ["say", 396, 849, 24, 0, "#58b870"],
      ["vary", 395, 885, 38, 0, "#d0a840"],
      ["whole", 396, 909, 46, 0, "#6a6a5a"],
      ["remain", 419, 933, 46, 0, "#40a8f0"],
      ["clings", 658, 1006, 40, 0, "#c8c860"],
      ["filed", 658, 1028, 38, 0, "#50d890"],
      ["changed", 1055, 1053, 62, 0, "#3a7a5a"],
      ["gate", 1042, 1090, 34, -35, "#6a4a4a"],
      ["dance", 1211, 1101, 48, 0, "#50a880"],
      ["man", 1235, 1006, 36, 0, "#3a3a9a"],
      ["brown", 1115, 981, 46, 0, "#90d850"],
      ["facing", 1115, 669, 46, 0, "#40c8a0"],
      ["planned", 154, 1064, 46, -30, "#c050c0"],
      ["station", 154, 1147, 44, -28, "#5a8a5a"],
      ["found", 276, 1124, 40, 18, "#c060d8"],
      ["antifa", 276, 1160, 40, 28, "#5080e0"],
      ["sunday", 300, 1196, 44, 8, "#3a7a8a"],
      ["mess", 467, 1185, 24, 0, "#4a9a8a"],
      ["dumb", 1403, 621, 46, 0, "#6a3a4a"],
      ["honest", 1424, 765, 50, 0, "#60a8d8"],
      ["blocking", 1412, 933, 66, 0, "#c03a4a"],
    ],
  },
  {
    x: 2760, y: 1188,
    words: [
      ["list", 415, 42, 85, 30, "#c8582c"],
      ["bet", 406, 110, 87, 0, "#8c38c8"],
      ["tech", 648, 48, 95, 0, "#44382c"],
      ["ill", 150, 67, 74, 28, "#4c207c"],
      ["abc", 132, 139, 70, 0, "#3a9048"],
      ["fire", 131, 186, 68, 0, "#b02c54"],
      ["law", 132, 234, 70, 0, "#6c2028"],
      ["life", 145, 317, 112, 44, "#54142c"],
      ["aint", 168, 389, 50, 5, "#5a2a5a"],
      ["sad", 183, 457, 138, -15, "#6c6014"],
      ["need", 538, 247, 297, 0, "#3474bc"],
      ["less", 482, 330, 105, -8, "#742c20"],
      ["tie", 659, 128, 38, 0, "#6ae03a"],
      ["attempt", 640, 377, 130, -40, "#2c5080"],
      ["john", 937, 99, 95, -13, "#b02cb4"],
      ["heres", 950, 167, 132, -34, "#34a08c"],
      ["wall", 971, 210, 54, 0, "#7a6a2a"],
      ["paid", 947, 277, 101, 0, "#902c6c"],
      ["agent", 947, 331, 109, 0, "#942870"],
      ["rules", 950, 390, 85, -36, "#386c3c"],
      ["laptop", 278, 505, 150, -13, "#38185c"],
      ["care", 555, 497, 172, -6, "#24501c"],
      ["across", 756, 492, 142, 0, "#943070"],
      ["believers", 985, 487, 100, 0, "#3a9a60"],
      ["mind", 1090, 509, 157, 0, "#18404c"],
      ["happy", 1258, 373, 144, 0, "#6c4c14"],
      ["part", 1343, 273, 67, 0, "#5a30e8"],
      ["likes", 1355, 331, 60, 0, "#58b030"],
      ["hrd", 1260, 427, 46, 0, "#c07a30"],
      ["find", 1092, 571, 50, 0, "#d8b030"],
      ["face", 562, 588, 91, 0, "#341c18"],
      ["amy", 574, 633, 66, 0, "#6a2ac0"],
      ["early", 575, 690, 76, 0, "#e03ac8"],
      ["failure", 578, 775, 112, -38, "#2c4858"],
      ["herd", 576, 859, 72, 0, "#b850a0"],
      ["idiot", 574, 918, 70, 12, "#902070"],
      ["cancel", 580, 1037, 92, -42, "#3a4a5a"],
      ["polls", 545, 1137, 155, -43, "#2c4c20"],
      ["yet", 299, 677, 88, 0, "#84a838"],
      ["god", 299, 764, 102, 0, "#842440"],
      ["sick", 299, 856, 107, 0, "#6020bc"],
      ["save", 299, 900, 98, 0, "#c0cc30"],
      ["ego", 279, 642, 44, -15, "#3a6ac0"],
      ["try", 862, 669, 105, 8, "#143c5c"],
      ["fine", 873, 616, 52, 28, "#3ae0a0"],
      ["biggest", 851, 738, 90, 0, "#9a30c0"],
      ["days", 862, 815, 148, -38, "#5c2ca4"],
      ["expert", 862, 884, 80, 0, "#5a7a2a"],
      ["glad", 828, 1028, 56, 0, "#e03060"],
      ["defeat", 875, 1067, 137, 0, "#2c60e4"],
      ["looks", 887, 1117, 120, 0, "#608c24"],
      ["say", 381, 1065, 303, 0, "#80a030"],
      ["done", 299, 1185, 197, 0, "#54b484"],
      ["follow", 454, 1195, 78, 0, "#7a2ab0"],
      ["holy", 563, 1195, 56, 0, "#b0dc3c"],
      ["caigning", 936, 1195, 108, 0, "#7a3a20"],
      ["seeing", 1366, 1195, 78, 0, "#3aa8d0"],
      ["day", 1218, 873, 232, 28, "#2c4014"],
      ["get", 1363, 518, 515, -42, "#224c50"],
      ["nict", 1150, 728, 60, 0, "#3ab8a0"],
      ["line", 1331, 619, 48, 0, "#3ab0a0"],
      ["hasnt", 1380, 953, 110, 0, "#1c5c2c"],
      ["ties", 1331, 859, 46, 0, "#4a6a4a"],
      ["attention", 660, 94, 70, 0, "#3a3a6a"],
      ["made", 552, 309, 36, 0, "#3a4ab0"],
      ["bone", 658, 309, 32, 0, "#40a8d8"],
      ["brought", 948, 45, 62, 0, "#40b8e0"],
      ["money", 912, 237, 48, 0, "#4a60c0"],
      ["yes", 108, 94, 22, 20, "#5a9a6a"],
      ["map", 107, 21, 24, 0, "#40a8a0"],
      ["mr", 107, 45, 22, 0, "#4aa890"],
      ["bus", 203, 43, 24, 0, "#4a4ac0"],
      ["goof", 108, 261, 22, -8, "#5aa05a"],
      ["war", 131, 357, 24, 0, "#50a8d0"],
      ["rob", 564, 453, 26, -15, "#c06a40"],
      ["withdraw", 420, 502, 72, 0, "#5060e0"],
      ["head", 504, 549, 38, 0, "#a09840"],
      ["explain", 875, 490, 46, -5, "#60d048"],
      ["also", 1259, 464, 26, 0, "#4a70a0"],
      ["county", 1199, 489, 48, -40, "#50b8e0"],
      ["blue", 323, 717, 36, 0, "#e0504a"],
      ["buddy", 311, 934, 50, 0, "#d8d040"],
      ["completed", 574, 717, 90, 0, "#9050f0"],
      ["were", 551, 741, 38, 0, "#58b050"],
      ["rule", 610, 813, 34, -40, "#e09050"],
      ["guest", 600, 885, 44, 0, "#3a7a6a"],
      ["pay", 611, 957, 26, -35, "#8060f0"],
      ["shirt", 600, 981, 38, 0, "#5a7a4a"],
      ["city", 827, 765, 30, 0, "#3a4a6a"],
      ["spoke", 815, 789, 44, 0, "#e07050"],
      ["works", 863, 909, 48, 0, "#6a40f0"],
      ["rats", 922, 1029, 30, 0, "#7a6a3a"],
      ["demand", 923, 1149, 72, 0, "#50e060"],
      ["plate", 190, 1028, 46, 0, "#4a80a0"],
      ["scored", 215, 1006, 46, 0, "#d050c0"],
      ["anonymous", 143, 1197, 88, 0, "#4a9a5a"],
      ["economics", 659, 1197, 84, 0, "#4a50c0"],
      ["agreement", 779, 1197, 82, 0, "#c83a5a"],
      ["appreciate", 1186, 1197, 80, 0, "#8ab050"],
      ["actor", 1054, 1089, 38, -42, "#6a70f0"],
      ["funny", 1102, 884, 34, 5, "#8050d0"],
      ["weather", 1057, 957, 50, 15, "#a05a50"],
      ["got", 1128, 691, 24, -10, "#4aa0a0"],
      ["won", 1138, 765, 36, 0, "#50d8a0"],
      ["vague", 1199, 933, 42, -5, "#60c050"],
      ["any", 1198, 968, 22, 0, "#8a50e0"],
      ["donation", 1379, 981, 70, 0, "#6a5a3a"],
      ["adults", 1380, 909, 46, 18, "#7a6a4a"],
      ["alex", 1403, 631, 40, 8, "#e04a90"],
      ["water", 1366, 357, 36, 0, "#40c890"],
      ["buying", 1318, 1101, 60, 0, "#5a4a4a"],
      ["cut", 1318, 1125, 28, -10, "#6a50c0"],
      ["over", 1320, 130, 34, 40, "#9aa060"],
      ["per", 1319, 176, 18, 0, "#8a8a4a"],
    ],
  },
  {
    x: 4080, y: 1188,
    words: [
      ["people", 466, 147, 1172, 0, "#3a26a8"],
      ["decisions", 439, 1092, 1592, 0, "#360c24"],
      ["isnt", 122, 870, 220, 43, "#1a3c2c"],
      ["racist", 203, 1098, 113, 0, "#741c34"],
      ["help", 1198, 114, 281, 0, "#2c74dc"],
      ["give", 1188, 272, 300, 22, "#280c14"],
      ["wow", 1283, 220, 89, 4, "#1c3454"],
      ["helped", 957, 305, 160, 28, "#30906c"],
      ["science", 947, 354, 91, 0, "#3a50e8"],
      ["ahead", 1210, 390, 92, 12, "#dc3c70"],
      ["win", 395, 342, 248, 27, "#a02cb8"],
      ["shot", 250, 281, 56, 0, "#4aa06a"],
      ["firing", 257, 342, 78, 42, "#6a3a30"],
      ["killed", 348, 414, 74, 0, "#e05a28"],
      ["states", 611, 372, 128, 0, "#64b42c"],
      ["next", 311, 520, 152, 0, "#841c18"],
      ["think", 537, 561, 860, -33, "#a030a0"],
      ["worst", 922, 539, 548, -32, "#7c2474"],
      ["year", 1230, 492, 228, -29, "#6c1488"],
      ["voters", 1273, 542, 126, -18, "#7c5420"],
      ["allowed", 1091, 560, 118, 0, "#842c20"],
      ["good", 1150, 652, 375, 0, "#18346c"],
      ["calling", 888, 668, 133, 0, "#40c06c"],
      ["went", 592, 711, 142, -30, "#bc8428"],
      ["politics", 789, 822, 705, 0, "#101c50"],
      ["voted", 1247, 759, 189, 0, "#5ca428"],
      ["press", 1088, 738, 66, 8, "#4aa8d0"],
      ["first", 1200, 822, 52, 0, "#3a1a60"],
      ["article", 1233, 890, 202, -38, "#24501c"],
      ["head", 1283, 960, 108, 40, "#5c5c20"],
      ["seems", 370, 869, 122, 15, "#306c80"],
      ["seen", 382, 945, 66, 0, "#3a5a2a"],
      ["shit", 730, 932, 174, 0, "#9028ac"],
      ["many", 995, 932, 270, 0, "#48a090"],
      ["managed", 1287, 1062, 118, -24, "#8a8a2a"],
      ["groups", 1298, 1100, 90, -14, "#b8e040"],
      ["small", 1296, 1148, 68, 0, "#3a60e8"],
      ["authors", 1284, 1187, 117, 0, "#309080"],
      ["silence", 852, 1196, 84, 0, "#dc4424"],
      ["economic", 623, 1196, 120, 0, "#48a828"],
      ["sharp", 163, 820, 72, 38, "#d86a40"],
      ["banned", 251, 166, 72, 0, "#60e060"],
      ["source", 1007, 166, 50, 0, "#e03a60"],
      ["encouraged", 1150, 45, 90, 0, "#e04a4a"],
      ["disproportionate", 1128, 166, 132, 0, "#4a80d0"],
      ["back", 297, 45, 40, -40, "#4a80b0"],
      ["policy", 405, 129, 38, -25, "#5a80a0"],
      ["safety", 406, 177, 40, -35, "#5a3a70"],
      ["music", 502, 237, 46, -15, "#d050c0"],
      ["ending", 492, 274, 48, 5, "#a09050"],
      ["followers", 779, 261, 74, 0, "#a03a60"],
      ["campaigns", 971, 262, 84, 0, "#6a3a9a"],
      ["whoever", 1305, 261, 66, 0, "#a0e050"],
      ["vote", 862, 82, 30, -35, "#b09060"],
      ["ruin", 874, 334, 32, -30, "#40c8b0"],
      ["hair", 1137, 333, 34, 0, "#50c8e8"],
      ["husband", 1307, 381, 60, 0, "#b050a0"],
      ["gun", 993, 381, 30, 0, "#4a9a7a"],
      ["damn", 335, 381, 40, 0, "#6a5a5a"],
      ["flattening", 551, 406, 84, 0, "#58d050"],
      ["missing", 335, 465, 74, -32, "#e08a50"],
      ["safe", 502, 465, 34, -28, "#50d8d8"],
      ["early", 168, 452, 26, -18, "#a0e050"],
      ["disease", 107, 501, 66, 0, "#b09850"],
      ["dream", 205, 632, 50, 30, "#d08050"],
      ["join", 261, 728, 30, -30, "#a8a860"],
      ["blue", 635, 741, 34, 0, "#4ab090"],
      ["competing", 827, 694, 82, 0, "#9050f0"],
      ["reports", 1151, 717, 58, 0, "#7a3a30"],
      ["civil", 1211, 441, 36, -15, "#b8b860"],
      ["holes", 392, 814, 46, -40, "#6a60d8"],
      ["come", 106, 766, 36, -30, "#8a5a4a"],
      ["use", 243, 897, 28, 45, "#6a60d0"],
      ["broke", 382, 908, 54, 0, "#8a9a4a"],
      ["caught", 479, 957, 50, 0, "#4a6a8a"],
      ["china", 228, 957, 50, 24, "#4aa05a"],
      ["mayor", 358, 992, 42, -30, "#7a5ac0"],
      ["trials", 935, 885, 46, 0, "#9a8040"],
      ["funds", 658, 993, 44, -8, "#b04060"],
      ["homes", 1306, 909, 44, -35, "#8a60c0"],
      ["comrade", 180, 1125, 68, 0, "#a04060"],
      ["cool", 360, 1112, 24, 0, "#a8a840"],
      ["sources", 240, 1197, 58, 0, "#58c050"],
      ["executive", 323, 1197, 70, 0, "#e04090"],
      ["garbage", 515, 1197, 62, 0, "#c050d0"],
      ["endorsement", 982, 1197, 98, 0, "#a04a6a"],
    ],
  },
];

function fitSize(text, length) {
  const em = [...text].reduce((sum, letter) => sum + ADVANCE[letter], -40) / 1000;
  return Math.round(length / em);
}

function Word({ word: [text, x, y, length, angle, color] }) {
  const size = fitSize(text, length);
  return (
    <text
      transform={`translate(${x} ${y}) rotate(${angle})`}
      y={Math.round(size * 0.236)}
      fontSize={size}
      fill={color}
      textAnchor="middle"
    >
      {text}
    </text>
  );
}

function WordCloud() {
  return (
    <svg
      viewBox="0 0 5424 2400"
      role="img"
      aria-label="Word cloud of tweets"
      className="block w-full overflow-visible font-bold font-['Liberation_Serif',serif]"
    >
      {SECTIONS.map((section) => (
        <g key={`${section.x},${section.y}`} transform={`translate(${section.x} ${section.y})`}>
          {section.words.map((word, i) => (
            <Word key={i} word={word} />
          ))}
        </g>
      ))}
    </svg>
  );
}

const HEADING = "text-[38px] leading-[40px] [-webkit-text-stroke:1px_#333]";

function RadioGroup({ title, name, options, initial }) {
  const [value, setValue] = useState(initial);
  return (
    <fieldset className="mb-[50px]">
      <legend className={`mb-7 ${HEADING}`}>{title}</legend>
      <div className="flex flex-wrap gap-x-7">
        {options.map((option) => (
          <label key={option} className="flex items-center gap-4 text-[28px] leading-10">
            <input
              type="radio"
              name={name}
              checked={value === option}
              onChange={() => setValue(option)}
              className="size-6 appearance-none rounded-full border border-[#d4d4d4] bg-white shadow-[inset_0_2px_2px_rgba(0,0,0,0.12)] checked:border-[8px] checked:border-[#3b88f7] checked:shadow-[0_1px_2px_rgba(0,80,200,0.3)]"
            />
            {option}
          </label>
        ))}
      </div>
    </fieldset>
  );
}

function Slider() {
  const [value, setValue] = useState(0);
  return (
    <div>
      <label htmlFor="removed" className={`mb-7 block ${HEADING}`}>
        Number of words removed from top...
      </label>
      <div className="flex items-start justify-between pl-[10px] text-xl leading-[30px]">
        <output htmlFor="removed" className="h-8 rounded-md bg-[#528dc8] px-[6px] text-[22px] leading-8 text-white">
          {value}
        </output>
        <span className="rounded-md bg-[#dddddd] px-[6px]">10</span>
      </div>
      <input
        id="removed"
        type="range"
        min="0"
        max="10"
        value={value}
        onChange={(e) => setValue(Number(e.target.value))}
        className="relative z-10 mt-1 block h-11 w-full appearance-none bg-transparent [&::-webkit-slider-runnable-track]:h-4 [&::-webkit-slider-runnable-track]:rounded-lg [&::-webkit-slider-runnable-track]:bg-linear-to-b [&::-webkit-slider-runnable-track]:from-[#dedede] [&::-webkit-slider-runnable-track]:to-white [&::-webkit-slider-runnable-track]:shadow-[inset_0_0_0_2px_#cccccc] [&::-webkit-slider-thumb]:-mt-4 [&::-webkit-slider-thumb]:size-11 [&::-webkit-slider-thumb]:appearance-none [&::-webkit-slider-thumb]:rounded-full [&::-webkit-slider-thumb]:border-2 [&::-webkit-slider-thumb]:border-[#ababab] [&::-webkit-slider-thumb]:bg-[#dddddd] [&::-webkit-slider-thumb]:shadow-[2px_2px_6px_rgba(0,0,0,0.3)]"
      />
      <div className="-mt-[14px] flex h-[46px] justify-between px-[21px] text-lg leading-5 text-[#99a4ac]">
        {Array.from({ length: 31 }, (_, i) => (
          <div key={i} className="flex w-0.5 flex-col items-center justify-between">
            <div className={i % 3 === 0 ? "h-4 w-0.5 bg-[#a3c0de]" : "h-2 w-0.5 bg-[#c4c4c4]"} />
            {i % 3 === 0 && <span>{i / 3}</span>}
          </div>
        ))}
      </div>
    </div>
  );
}

export default function App() {
  return (
    <div className="bg-white pr-[18px] pl-[14px] font-['Liberation_Sans',Arial,sans-serif] text-[#333333]">
      <h1 className="pt-[7px] pb-[19px] text-[62px] leading-[68px] [-webkit-text-stroke:2px_#333]">
        Election Tweets Explorer
      </h1>
      <div className="grid grid-cols-3">
        <div className="px-[30px]">
          <form
            onSubmit={(e) => e.preventDefault()}
            className="rounded-lg border-2 border-[#e3e3e3] bg-[#f5f5f5] px-[38px] pt-[58px] pb-[67px] shadow-[inset_0_2px_2px_rgba(0,0,0,0.05)]"
          >
            <RadioGroup
              title="Tweets containing..."
              name="hashtag"
              options={["#JoeBiden", "#DonaldTrump", "Either"]}
              initial="Either"
            />
            <RadioGroup
              title="Tweets from states won by..."
              name="states"
              options={["Democrats", "Republicans", "All States"]}
              initial="All States"
            />
            <Slider />
            <p className="mt-[38px] text-[25px] leading-[26px] [-webkit-text-stroke:1px_#333]">
              *The most frequent words are common among various parameters
              making word clouds similar. You may want to remove words from the
              top to observe more sensitive differences among tweets.
            </p>
            <label htmlFor="query" className={`mt-[38px] mb-7 block ${HEADING}`}>
              Tweets containing specific text:
            </label>
            <input
              id="query"
              type="text"
              className="block h-[68px] w-full rounded-lg border-2 border-[#cccccc] bg-white px-6 text-[28px] shadow-[inset_0_2px_2px_rgba(0,0,0,0.075)]"
            />
          </form>
        </div>
        <main className="col-span-2 pr-[38px] pl-7">
          <WordCloud />
          <div className="mt-[10px] ml-[2px] size-4 bg-white shadow-[0_0_8px_2px_rgba(0,0,153,0.5)]" />
        </main>
      </div>
    </div>
  );
}
